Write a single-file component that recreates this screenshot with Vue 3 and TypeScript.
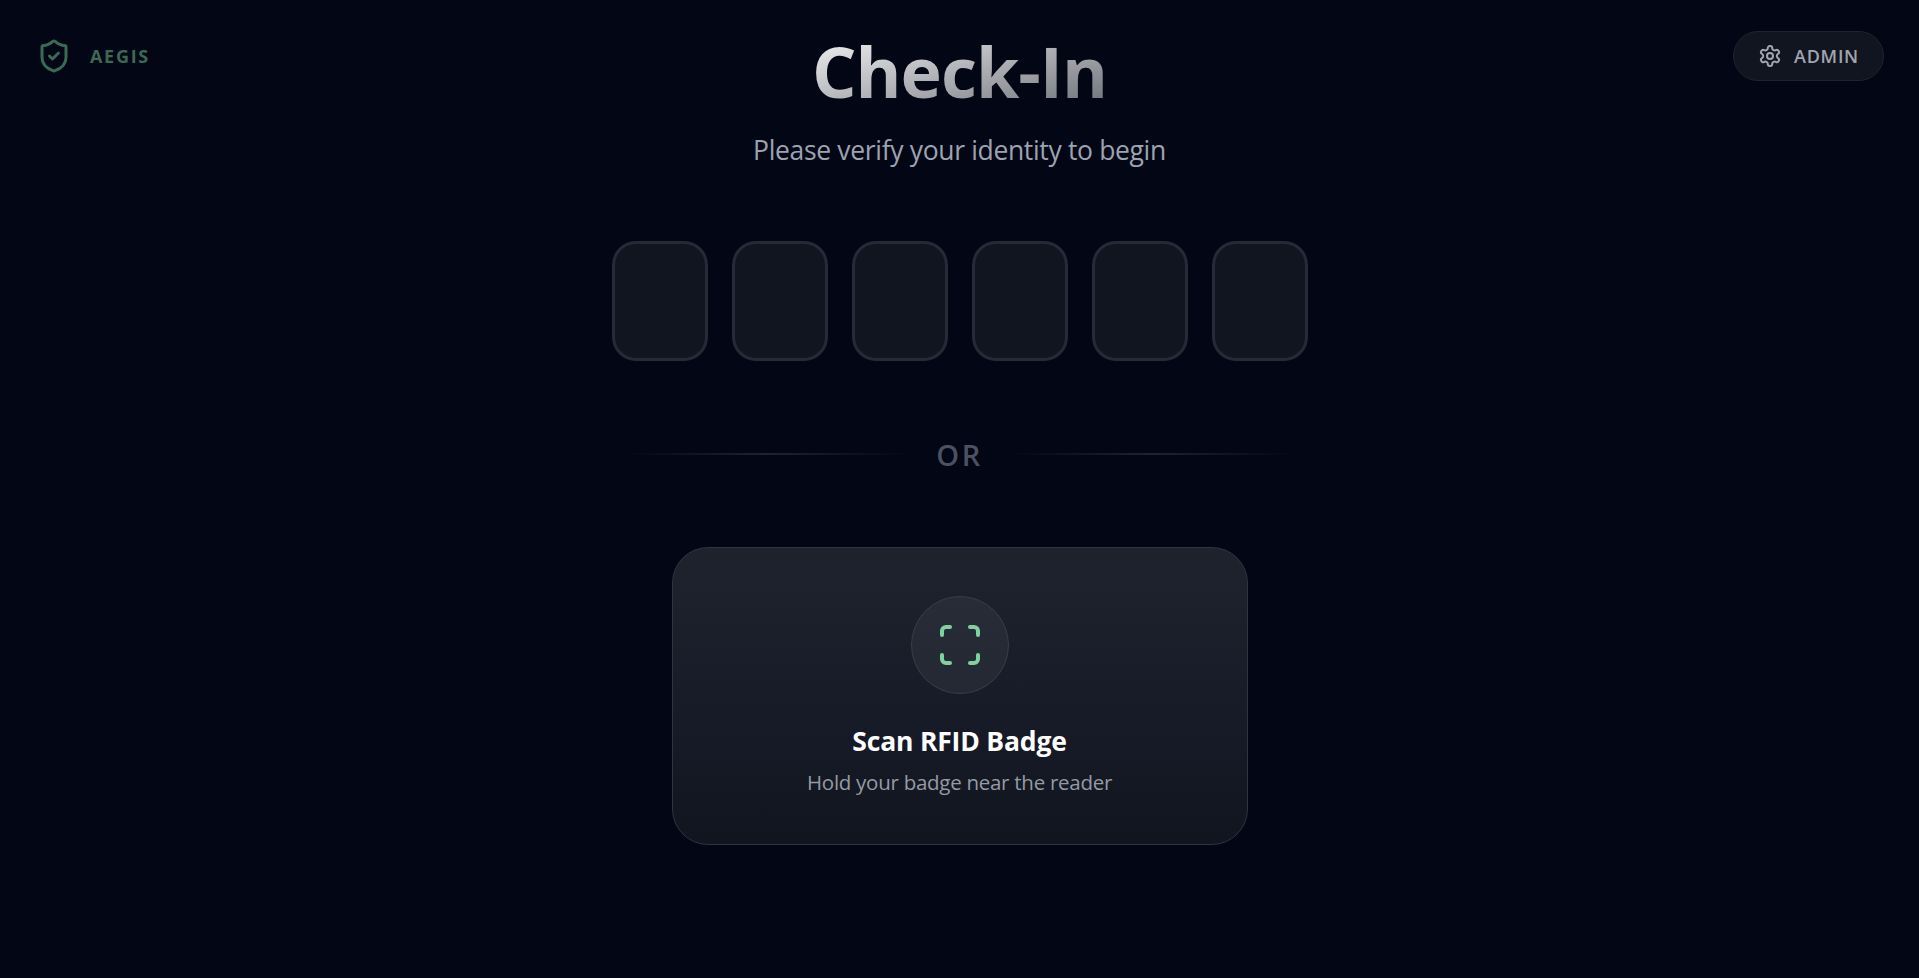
<script setup lang="ts">
import { ref } from 'vue'

const digits = ref<string[]>(['', '', '', '', '', ''])
</script>

<template>
  <div class="screen">
    <div class="brand">
      <svg class="shield" viewBox="0 0 24 24" fill="none" stroke="currentColor" stroke-width="2" stroke-linecap="round" stroke-linejoin="round">
        <path d="M20 13c0 5-3.5 7.5-7.66 8.95a1 1 0 0 1-.67-.01C7.5 20.5 4 18 4 13V6a1 1 0 0 1 1-1c2 0 4.5-1.2 6.24-2.72a1.17 1.17 0 0 1 1.52 0C14.51 3.81 17 5 19 5a1 1 0 0 1 1 1z" />
        <path d="m9 12 2 2 4-4" />
      </svg>
      <span>AEGIS</span>
    </div>

    <main class="content">
      <h1><span>Check-In</span></h1>
      <p class="subtitle">Please verify your identity to begin</p>

      <div class="pin">
        <div v-for="(digit, i) in digits" :key="i" class="cell">{{ digit }}</div>
      </div>

      <div class="divider">
        <i></i>
        <span>OR</span>
        <i></i>
      </div>

      <section class="card">
        <div class="badge">
          <svg viewBox="0 0 24 24" fill="none" stroke="currentColor" stroke-width="2" stroke-linecap="round" stroke-linejoin="round">
            <path d="M3 7V5a2 2 0 0 1 2-2h2M17 3h2a2 2 0 0 1 2 2v2M21 17v2a2 2 0 0 1-2 2h-2M7 21H5a2 2 0 0 1-2-2v-2" />
          </svg>
        </div>
        <h2>Scan RFID Badge</h2>
        <p>Hold your badge near the reader</p>
      </section>
    </main>

    <button class="admin" type="button">
      <svg viewBox="0 0 24 24" fill="none" stroke="currentColor" stroke-width="2" stroke-linecap="round" stroke-linejoin="round">
        <path d="M12.22 2h-.44a2 2 0 0 0-2 2v.18a2 2 0 0 1-1 1.73l-.43.25a2 2 0 0 1-2 0l-.15-.08a2 2 0 0 0-2.73.73l-.22.38a2 2 0 0 0 .73 2.73l.15.1a2 2 0 0 1 1 1.72v.51a2 2 0 0 1-1 1.74l-.15.09a2 2 0 0 0-.73 2.73l.22.38a2 2 0 0 0 2.73.73l.15-.08a2 2 0 0 1 2 0l.43.25a2 2 0 0 1 1 1.73V20a2 2 0 0 0 2 2h.44a2 2 0 0 0 2-2v-.18a2 2 0 0 1 1-1.73l.43-.25a2 2 0 0 1 2 0l.15.08a2 2 0 0 0 2.73-.73l.22-.39a2 2 0 0 0-.73-2.73l-.15-.08a2 2 0 0 1-1-1.74v-.5a2 2 0 0 1 1-1.74l.15-.09a2 2 0 0 0 .73-2.73l-.22-.38a2 2 0 0 0-2.73-.73l-.15.08a2 2 0 0 1-2 0l-.43-.25a2 2 0 0 1-1-1.73V4a2 2 0 0 0-2-2z" />
        <circle cx="12" cy="12" r="3" />
      </svg>
      <span>ADMIN</span>
    </button>
  </div>
</template>

<style>
html,
body {
  background: #020615;
}
</style>

<style scoped>
.screen {
  display: grid;
  grid-template-columns: 1fr 696px 1fr;
  align-items: start;
  height: 978px;
  overflow: hidden;
  background: #020615;
  font-family: "Open Sans", "Noto Sans", sans-serif;
}

.brand {
  display: flex;
  align-items: center;
  gap: 18px;
  height: 50px;
  margin: 31px 0 0 36px;
  color: #3a6954;
  font-size: 18px;
  font-weight: 700;
  letter-spacing: 1.7px;
}

.shield {
  width: 36px;
  height: 36px;
}

.content {
  display: flex;
  flex-direction: column;
  align-items: center;
}

h1,
h2,
p {
  margin: 0;
  white-space: nowrap;
}

h1 {
  margin-top: 31px;
  height: 80px;
  font-size: 70px;
  line-height: 80px;
  font-weight: 700;
  letter-spacing: -1px;
}

h1 span {
  display: block;
  background: linear-gradient(to bottom right, rgba(255, 255, 255, 0.97), rgba(255, 255, 255, 0.42));
  background-clip: text;
  -webkit-background-clip: text;
  color: transparent;
}

.subtitle {
  margin-top: 19px;
  height: 40px;
  line-height: 40px;
  font-size: 26.5px;
  letter-spacing: -0.34px;
  color: #9ca3af;
}

.pin {
  display: flex;
  gap: 24px;
  margin-top: 71px;
}

.cell {
  box-sizing: border-box;
  width: 96px;
  height: 120px;
  border: 3px solid #272a36;
  border-radius: 24px;
  background: #11151f;
}

.divider {
  display: flex;
  align-items: center;
  gap: 24px;
  width: 674px;
  height: 40px;
  margin-top: 73px;
}

.divider i {
  flex: 1;
  height: 2px;
  background: linear-gradient(90deg, transparent, #20232f, transparent);
}

.divider span {
  font-size: 29px;
  font-weight: 600;
  letter-spacing: 2.6px;
  color: #4b5162;
}

.card {
  box-sizing: border-box;
  display: flex;
  flex-direction: column;
  align-items: center;
  width: 576px;
  height: 298px;
  margin-top: 73px;
  padding-top: 48px;
  border: 1px solid #31343f;
  border-radius: 36px;
  background: linear-gradient(180deg, #1f232e, #161a26 65%, #11151f);
}

.badge {
  box-sizing: border-box;
  display: flex;
  align-items: center;
  justify-content: center;
  width: 98px;
  height: 98px;
  border: 1px solid #3a3d48;
  border-radius: 50%;
  background: linear-gradient(180deg, #282c37, #242833);
  color: #7dd3a0;
}

.badge svg {
  width: 48px;
  height: 48px;
}

.card h2 {
  margin-top: 29px;
  height: 36px;
  line-height: 36px;
  font-size: 26.5px;
  font-weight: 700;
  letter-spacing: -0.18px;
  color: #ffffff;
}

.card p {
  margin-top: 8px;
  height: 30px;
  line-height: 30px;
  font-size: 20.5px;
  letter-spacing: -0.27px;
  color: #969aa5;
}

.admin {
  box-sizing: border-box;
  justify-self: end;
  display: flex;
  align-items: center;
  justify-content: center;
  gap: 12px;
  width: 151px;
  height: 50px;
  margin: 31px 35px 0 0;
  padding: 0;
  border: 1px solid #20232e;
  border-radius: 25px;
  background: #11151f;
  color: #a1a5af;
  font: 600 18px "Open Sans", "Noto Sans", sans-serif;
  letter-spacing: 0.7px;
}

.admin svg {
  width: 24px;
  height: 24px;
}
</style>
